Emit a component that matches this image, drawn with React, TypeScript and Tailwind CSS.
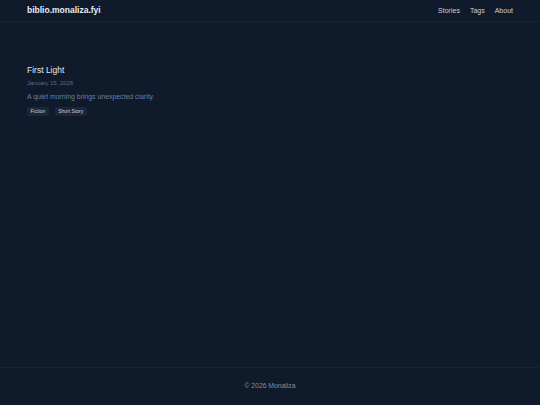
export default function App() {
  return (
    <div
      className="min-h-screen flex flex-col bg-[#0f1a2b]"
      style={{ fontFamily: '"Liberation Sans", Arial, sans-serif' }}
    >
      <header className="h-[22px] flex items-center justify-between px-[27px] border-b border-[#172336]">
        <div className="text-[8.5px] font-bold text-[#e8ecf2] leading-none">biblio.monaliza.fyi</div>
        <nav className="flex gap-[10px] text-[7px] text-[#c8d0dc] leading-none">
          <span>Stories</span>
          <span>Tags</span>
          <span>About</span>
        </nav>
      </header>
      <main className="flex-1 px-[27px] pt-[44px]">
        <div className="text-[8.5px] text-[#e2e7ee] leading-none">First Light</div>
        <div className="mt-[5px] text-[6px] text-[#5a6f8c] leading-none">January 15, 2026</div>
        <div className="mt-[8px] text-[6.9px] text-[#6781a3] leading-none">A quiet morning brings unexpected clarity.</div>
        <div className="mt-[7px] flex gap-[6px]">
          <span className="h-[9px] px-[3.5px] flex items-center rounded-[2px] bg-[#1b2638] text-[5px] text-[#c8d0dc] leading-none">Fiction</span>
          <span className="h-[9px] px-[3.5px] flex items-center rounded-[2px] bg-[#1b2638] text-[5px] text-[#c8d0dc] leading-none">Short Story</span>
        </div>
      </main>
      <footer className="h-[38px] border-t border-[#172336] flex items-center justify-center">
        <span className="text-[6.8px] text-[#8190a6] leading-none">© 2026 Monaliza</span>
      </footer>
    </div>
  );
}
